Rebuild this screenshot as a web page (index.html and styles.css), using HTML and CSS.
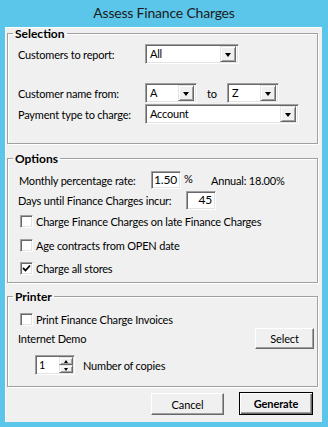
FILE: index.html
```html
<!DOCTYPE html>
<html>
<head>
<meta charset="utf-8">
<link rel="stylesheet" href="styles.css">
</head>
<body>
<div class="window">
  <div class="titlebar">Assess Finance Charges</div>
  <div class="client">
    <fieldset class="group g-sel">
      <legend>Selection</legend>
      <div class="row r1">
        <span class="lbl">Customers to report:</span>
        <div class="combo w-all"><span class="val">All</span><span class="drop"><i class="arrow"></i></span></div>
      </div>
      <div class="row r2">
        <span class="lbl">Customer name from:</span>
        <div class="combo w-az"><span class="val">A</span><span class="drop"><i class="arrow"></i></span></div>
        <span class="to">to</span>
        <div class="combo w-az"><span class="val">Z</span><span class="drop"><i class="arrow"></i></span></div>
      </div>
      <div class="row r3">
        <span class="lbl">Payment type to charge:</span>
        <div class="combo w-acc"><span class="val">Account</span><span class="drop"><i class="arrow"></i></span></div>
      </div>
    </fieldset>

    <fieldset class="group g-opt">
      <legend>Options</legend>
      <div class="row o1">
        <span class="lbl-rate">Monthly percentage rate:</span>
        <div class="edit w-rate">1.50</div>
        <span class="pct">%</span>
        <span class="annual">Annual: 18.00%</span>
      </div>
      <div class="row o2">
        <span class="lbl-days">Days until Finance Charges incur:</span>
        <div class="edit w-days">45</div>
      </div>
      <div class="row cbrow o3">
        <span class="cb"></span><span class="cbl">Charge Finance Charges on late Finance Charges</span>
      </div>
      <div class="row cbrow o4">
        <span class="cb"></span><span class="cbl">Age contracts from OPEN date</span>
      </div>
      <div class="row cbrow o5">
        <span class="cb"><svg width="9" height="9" viewBox="0 0 9 9"><path d="M1 4 L3.5 6.5 L8 1.5" fill="none" stroke="#000" stroke-width="1.8"/></svg></span><span class="cbl">Charge all stores</span>
      </div>
    </fieldset>

    <fieldset class="group g-prn">
      <legend>Printer</legend>
      <div class="row cbrow p1">
        <span class="cb"></span><span class="cbl">Print Finance Charge Invoices</span>
      </div>
      <div class="row p2">
        <span class="lbl-inet">Internet Demo</span>
        <button class="btn btn-select">Select</button>
      </div>
      <div class="row p3">
        <div class="spin">
          <span class="spin-val">1</span>
          <span class="spin-btns">
            <span class="sbtn"><i class="up"></i></span>
            <span class="sbtn"><i class="down"></i></span>
          </span>
        </div>
        <span class="copies">Number of copies</span>
      </div>
    </fieldset>

    <div class="buttons">
      <button class="btn btn-cancel">Cancel</button>
      <button class="btn btn-gen">Generate</button>
    </div>
  </div>
</div>
</body>
</html>
```

FILE: styles.css
```css
html, body {
  margin: 0;
  padding: 0;
}
body {
  width: 328px;
  height: 427px;
  overflow: hidden;
  background: #5bc6ea;
  font-family: Lato, "Noto Sans", sans-serif;
  font-size: 11px;
  letter-spacing: -0.2px;
  color: #000;
}
.window {
  width: 328px;
  height: 427px;
  box-sizing: border-box;
  background: #5bc6ea;
}
.titlebar {
  height: 27px;
  line-height: 26px;
  text-align: center;
  font-size: 14px;
  letter-spacing: -0.2px;
  color: #1b1b1b;
}
.client {
  margin-left: 5px;
  width: 317px;
  height: 395px;
  background: #f0f0f0;
  box-sizing: border-box;
  padding-top: 0;
  overflow: hidden;
  box-shadow: inset 1px 1px 0 #fdfdfd;
}
.group {
  margin: 0 0 0 2px;
  width: 311px;
  box-sizing: border-box;
  padding: 0;
  border: 1px solid #a0a0a0;
  box-shadow: inset 1px 1px 0 #fff, 1px 1px 0 #fff;
  min-inline-size: 0;
}
.group legend {
  margin-left: 5px;
  padding: 0 2px;
  font-weight: bold;
  line-height: 13px;
  font-size: 12px;
  letter-spacing: 0;
}
.g-opt { margin-top: 8px; }
.g-prn { margin-top: 7px; }

.row {
  display: flex;
  align-items: center;
  padding-left: 10px;
  white-space: nowrap;
}
.lbl {
  width: 127px;
}
/* selection rows */
.r1 { margin-top: 4px; height: 20px; }
.r2 { margin-top: 19px; height: 20px; }
.r3 { margin-top: 1px; height: 20px; margin-bottom: 19px; }

.combo {
  height: 20px;
  box-sizing: border-box;
  background: #fff;
  border: 1px solid;
  border-color: #a0a0a0 #fff #fff #a0a0a0;
  box-shadow: inset 1px 1px 0 #696969, inset -1px -1px 0 #e3e3e3;
  display: flex;
  align-items: center;
  padding: 2px;
}
.combo .val {
  flex: 1;
  padding-left: 2px;
  line-height: 14px;
}
.drop {
  width: 16px;
  height: 16px;
  box-sizing: border-box;
  background: #f0f0f0;
  border: 1px solid;
  border-color: #e3e3e3 #696969 #696969 #e3e3e3;
  box-shadow: inset 1px 1px 0 #fff, inset -1px -1px 0 #a0a0a0;
  display: flex;
  align-items: center;
  justify-content: center;
}
.arrow {
  width: 0;
  height: 0;
  border-left: 3.5px solid transparent;
  border-right: 3.5px solid transparent;
  border-top: 4px solid #000;
  margin-top: 1px;
}
.w-all { width: 94px; }
.w-az { width: 52px; }
.w-acc { width: 154px; }
.to { width: 30px; text-align: center; }

/* options */
.o1 { height: 18px; margin-top: 6px; padding-left: 11px; }
.o2 { height: 19px; margin-top: 2px; }
.o3 { height: 20px; margin-top: 1px; }
.o4 { height: 20px; margin-top: 4px; }
.o5 { height: 20px; margin-top: 3px; margin-bottom: 4px; }
.lbl-rate { width: 132px; }
.lbl-days { width: 168px; }
.edit {
  height: 100%;
  box-sizing: border-box;
  background: #fff;
  border: 1px solid;
  border-color: #a0a0a0 #fff #fff #a0a0a0;
  box-shadow: inset 1px 1px 0 #696969, inset -1px -1px 0 #e3e3e3;
  text-align: right;
  padding-right: 3px;
  line-height: 16px;
  font-size: 12px;
}
.w-rate { width: 30px; }
.w-days { width: 30px; }
.pct { margin-left: 3px; margin-top: -4px; width: 27px; }

.cbrow { padding-left: 12px; }
.cb {
  width: 13px;
  height: 13px;
  box-sizing: border-box;
  background: #fff;
  border: 1px solid;
  border-color: #a0a0a0 #fff #fff #a0a0a0;
  box-shadow: inset 1px 1px 0 #696969, inset -1px -1px 0 #e3e3e3;
  display: flex;
  align-items: center;
  justify-content: center;
  margin-right: 3px;
}
.cb svg { display: block; }

/* printer */
.p1 { height: 18px; margin-top: 7px; }
.p2 { height: 21px; padding-right: 3px; justify-content: space-between; }
.p3 { height: 20px; margin-top: 6px; margin-bottom: 11px; padding-left: 27px; }

.spin {
  width: 40px;
  height: 20px;
  box-sizing: border-box;
  background: #fff;
  border: 1px solid;
  border-color: #a0a0a0 #fff #fff #a0a0a0;
  box-shadow: inset 1px 1px 0 #696969, inset -1px -1px 0 #e3e3e3;
  display: flex;
  padding: 1px;
}
.spin-val {
  flex: 1;
  padding-left: 2px;
  line-height: 16px;
}
.spin-btns {
  width: 14px;
  display: flex;
  flex-direction: column;
}
.sbtn {
  flex: 1;
  box-sizing: border-box;
  background: #f0f0f0;
  border: 1px solid;
  border-color: #e3e3e3 #696969 #696969 #e3e3e3;
  box-shadow: inset 1px 1px 0 #fff, inset -1px -1px 0 #a0a0a0;
  display: flex;
  align-items: center;
  justify-content: center;
}
.up {
  width: 0; height: 0;
  border-left: 2.5px solid transparent;
  border-right: 2.5px solid transparent;
  border-bottom: 3px solid #000;
}
.down {
  width: 0; height: 0;
  border-left: 2.5px solid transparent;
  border-right: 2.5px solid transparent;
  border-top: 3px solid #000;
}
.copies { margin-left: 8px; }

.btn {
  font-family: inherit;
  font-size: 11px;
  letter-spacing: -0.1px;
  color: #000;
  background: #f0f0f0;
  box-sizing: border-box;
  border: 1px solid;
  border-color: #fff #696969 #696969 #fff;
  box-shadow: inset -1px -1px 0 #a0a0a0;
  padding: 0;
  margin: 0;
}
.btn-select { width: 59px; height: 21px; }

.buttons {
  display: flex;
  justify-content: flex-end;
  gap: 15px;
  padding-right: 9px;
  margin-top: 5px;
}
.btn-cancel { width: 73px; height: 22px; margin-top: 1px; }
.btn-gen {
  width: 74px;
  height: 23px;
  font-weight: bold;
  border: 1px solid #000;
  box-shadow: inset 1px 1px 0 #fff, inset -1px -1px 0 #696969, inset -2px -2px 0 #a0a0a0;
}
```
